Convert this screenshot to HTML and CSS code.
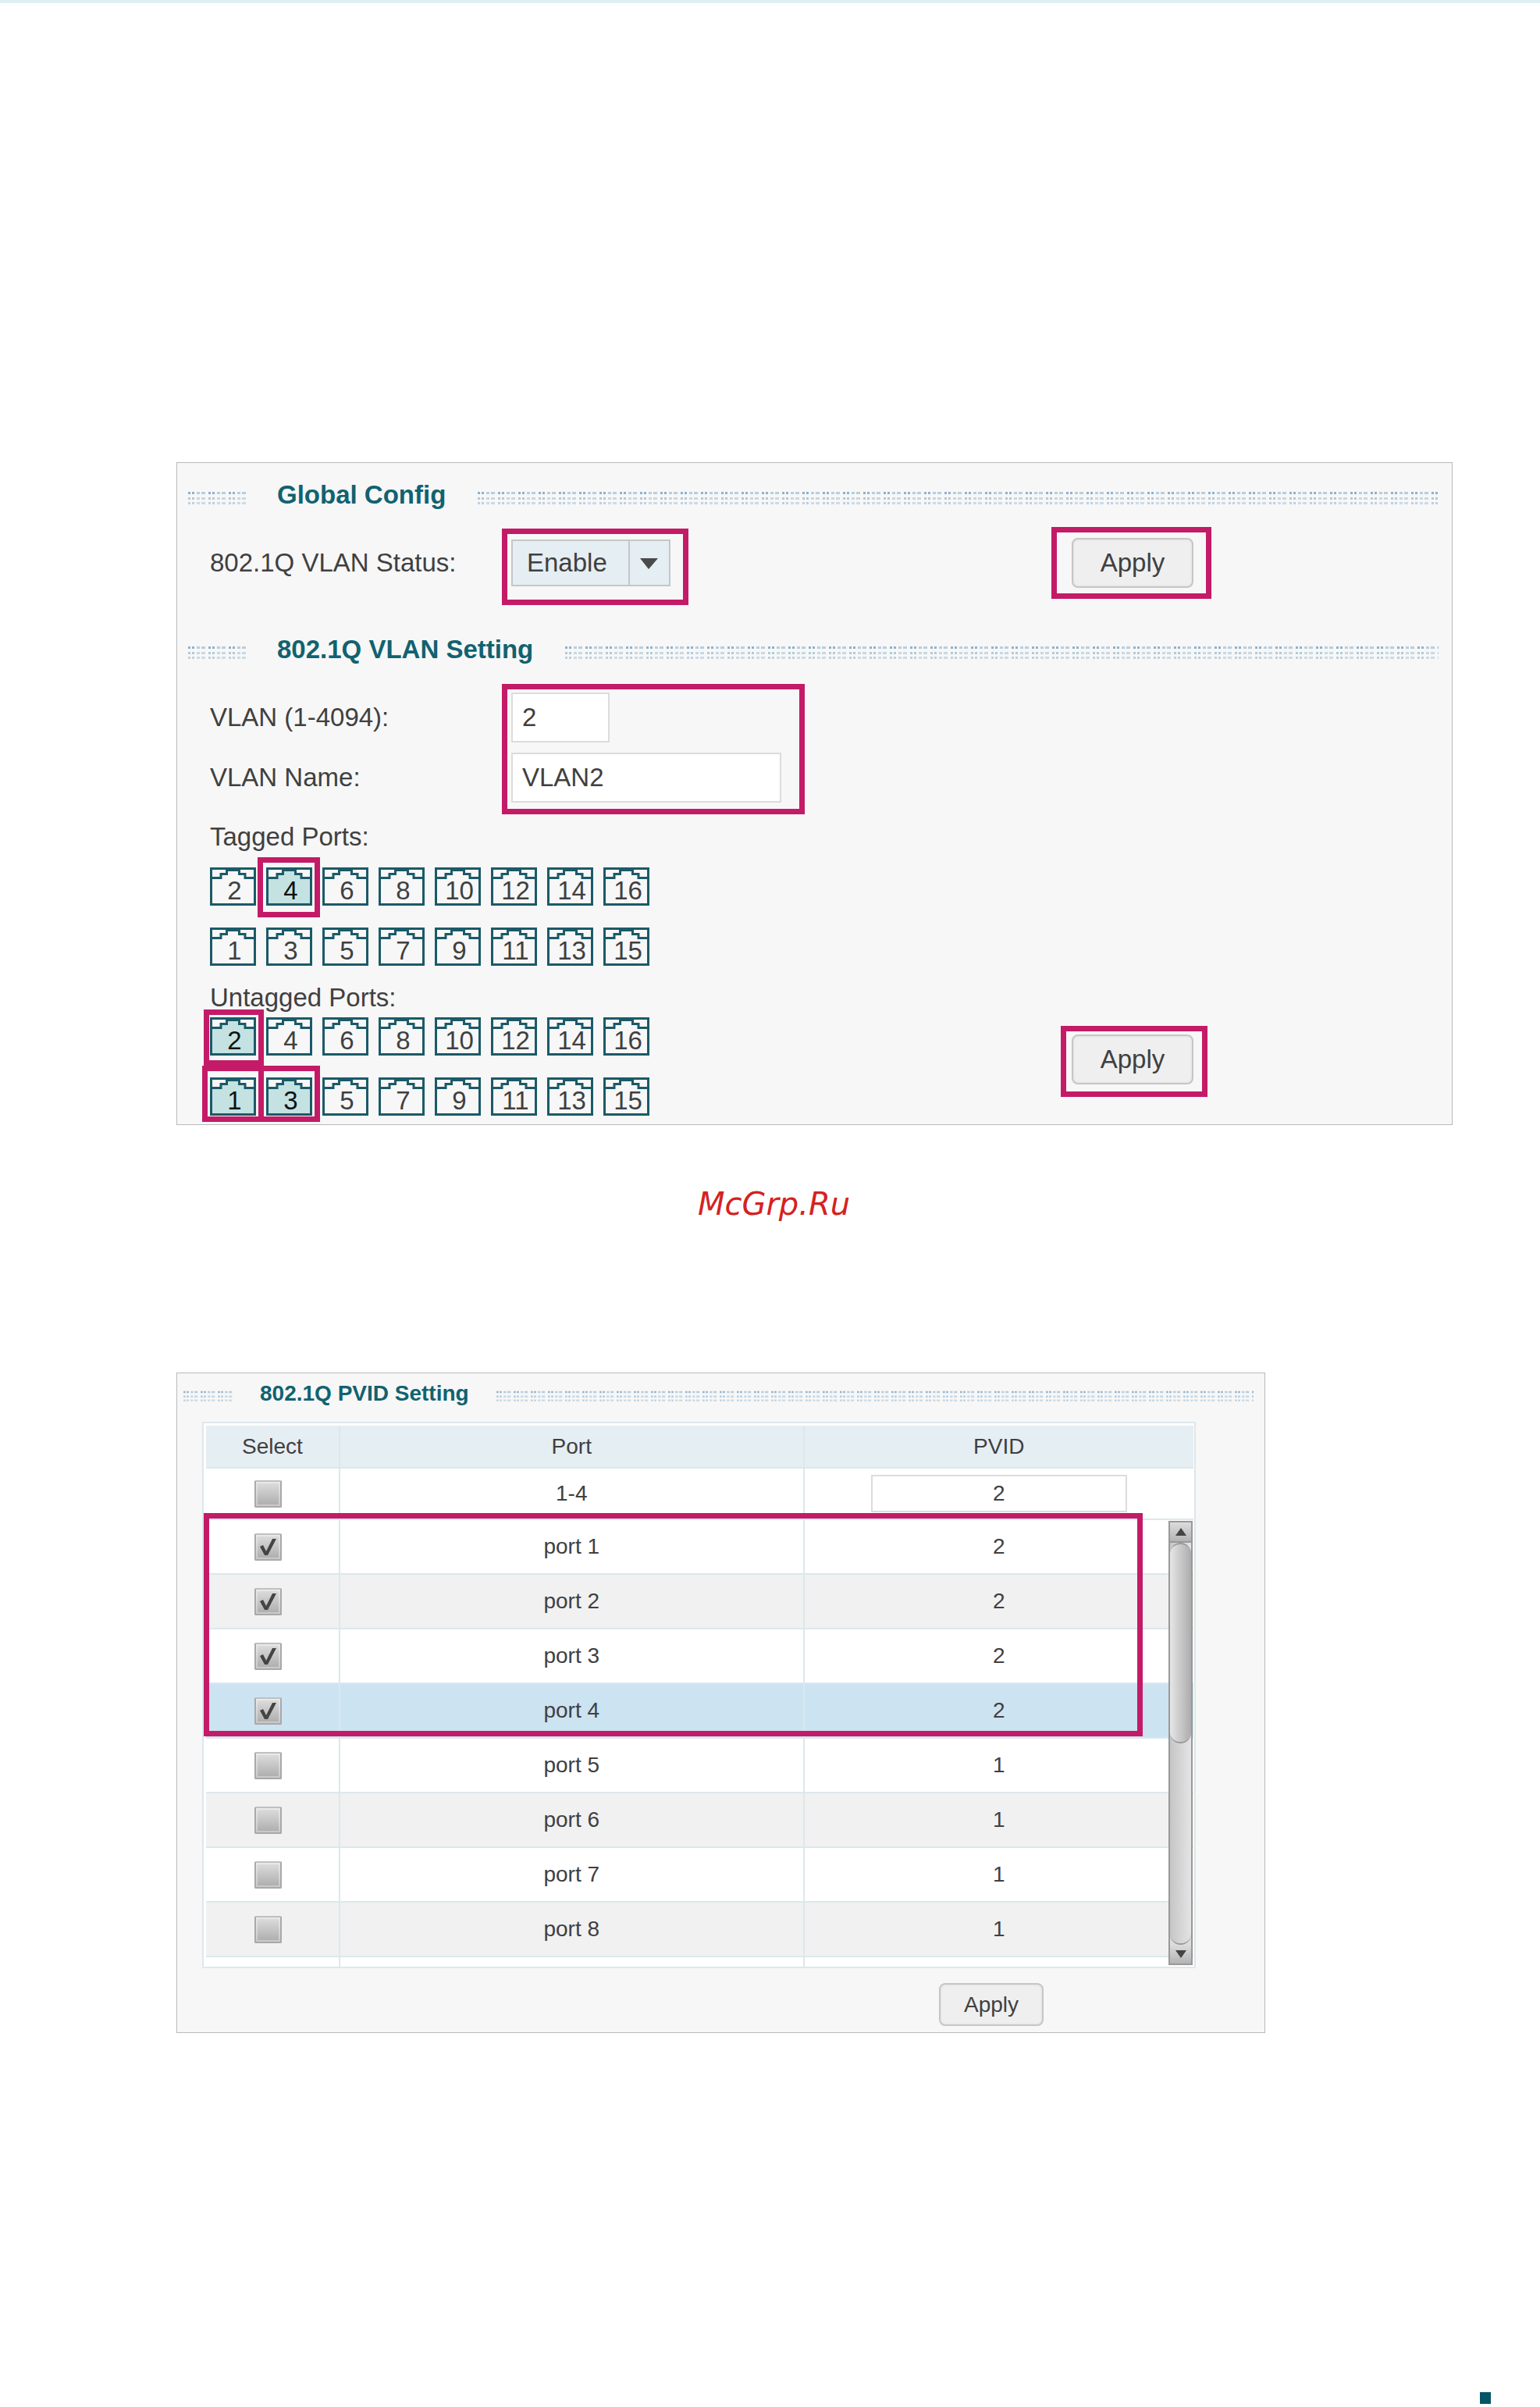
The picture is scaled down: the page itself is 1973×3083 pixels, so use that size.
FILE: index.html
```html
<!DOCTYPE html>
<html lang="en">
<head>
  <meta charset="UTF-8" />
  <meta name="viewport" content="width=device-width, initial-scale=1.0" />
  <title>802.1Q VLAN</title>
  <link rel="stylesheet" href="styles.css">
</head>
<body>
  <main>
    <section class="panel vlan-panel">
      <h2 class="section-title">Global Config</h2>
      <div class="row">
        <label for="status">802.1Q VLAN Status:</label>
        <span class="mark mark-select">
          <select id="status">
            <option>Enable</option>
            <option>Disable</option>
          </select>
        </span>
        <span class="mark mark-apply"><button class="btn">Apply</button></span>
      </div>

      <h2 class="section-title">802.1Q VLAN Setting</h2>
      <div class="fields">
        <div class="field-labels">
          <label for="vlanId">VLAN (1-4094):</label>
          <label for="vlanName">VLAN Name:</label>
        </div>
        <div class="field-inputs mark mark-fields">
          <input class="vlan-id" id="vlanId" type="text" value="2">
          <input class="vlan-name" id="vlanName" type="text" value="VLAN2">
        </div>
      </div>

      <h3 class="ports-title">Tagged Ports:</h3>
      <div class="ports tagged" id="tagged"></div>
      <h3 class="ports-title">Untagged Ports:</h3>
      <div class="ports-row">
        <div class="ports untagged" id="untagged"></div>
        <span class="mark mark-apply-low"><button class="btn">Apply</button></span>
      </div>
    </section>

    <p class="site-name">McGrp.Ru</p>

    <section class="panel pvid-panel">
      <h2 class="section-title">802.1Q PVID Setting</h2>
      <div class="table-wrap">
        <table>
          <thead>
            <tr><th class="col-select">Select</th><th class="col-port">Port</th><th>PVID</th></tr>
            <tr class="edit-row">
              <td><input type="checkbox" aria-label="Select all ports"></td>
              <td>1-4</td>
              <td><input class="pvid" type="text" value="2" aria-label="PVID"></td>
            </tr>
          </thead>
          <tbody id="portRows"></tbody>
        </table>
        <div class="rows-mark"></div>
        <div class="scrollbar">
          <button class="scroll-btn" aria-label="Scroll up"><svg viewBox="0 0 14 10"><path d="M7 0L14 10H0z"/></svg></button>
          <div class="track"><div class="thumb"></div></div>
          <button class="scroll-btn" aria-label="Scroll down"><svg viewBox="0 0 14 10"><path d="M0 0H14L7 10z"/></svg></button>
        </div>
      </div>
      <button class="btn btn-small">Apply</button>
    </section>
  </main>
  <footer><span class="page-tab"></span></footer>
  <script src="script.js"></script>
</body>
</html>
```
FILE: styles.css
```css
* {
  box-sizing: border-box;
}
body {
  margin: 0;
  min-height: 100vh;
  display: flex;
  flex-direction: column;
  border-top: 4px solid #e1eff3;
  background: #fff;
  color: #404040;
  font-family: "Liberation Sans", Arial, sans-serif;
  font-size: 33px;
  line-height: 38px;
}
main {
  padding: 588px 112px 0 226px;
}
button, input, select {
  font: inherit;
  color: inherit;
}

/* panels */
.panel {
  background: #f7f7f7;
  border: 1px solid #b9b9b9;
}
.vlan-panel {
  padding: 22px 0 10px;
}
.section-title {
  display: flex;
  align-items: center;
  gap: 40px;
  margin: 0;
  padding: 0 17px 0 13px;
  font-size: inherit;
  color: #116270;
}
.section-title::before,
.section-title::after {
  content: "";
  height: 17px;
  margin-top: 6px;
  background: url("data:image/svg+xml,%3Csvg xmlns='http://www.w3.org/2000/svg' width='26' height='17' viewBox='0 0 26 17'%3E%3Cg fill='%238fb2cd'%3E%3Cpath d='M1 1h3v3h-3zM6 1h3v3h-3z'/%3E%3Cpath d='M12 1h4v3h-4zM18 1h5v3h-5z' opacity='.6'/%3E%3Cpath d='M1 8h3v3h-3zM6 8h3v3h-3z' opacity='.65'/%3E%3Cpath d='M12 8h4v3h-4zM18 8h5v3h-5z' opacity='.45'/%3E%3Cpath d='M1 14h3v3h-3zM6 14h3v3h-3z' opacity='.55'/%3E%3Cpath d='M12 14h4v3h-4zM18 14h5v3h-5z' opacity='.4'/%3E%3C/g%3E%3C/svg%3E") repeat-x;
}
.section-title::before {
  width: 75px;
}
.section-title::after {
  flex: 1;
}
.row {
  display: grid;
  grid-template-columns: 386px 1fr auto;
  align-items: center;
  justify-items: start;
  height: 64px;
  margin: 36px 331px 60px 42px;
}
.fields {
  display: flex;
  margin: 36px 42px 25px;
}
.field-labels {
  width: 386px;
}
.field-labels,
.field-inputs {
  display: grid;
  grid-auto-rows: 64px;
  row-gap: 13px;
  align-items: center;
}
input[type="text"] {
  height: 64px;
  padding: 0 12px;
  border: 2px solid #dcdcdc;
  background: #fff;
}
.vlan-id {
  width: 126px;
}
.vlan-name {
  width: 346px;
}
select {
  display: block;
  width: 204px;
  height: 60px;
  padding: 0 18px;
  appearance: none;
  border: 2px solid #c4c7c9;
  border-radius: 0;
  background: #e5eef3 url("data:image/svg+xml,%3Csvg xmlns='http://www.w3.org/2000/svg' width='52' height='56'%3E%3Cpath d='M1 0v56' stroke='%23c4c7c9' stroke-width='2'/%3E%3Cpath d='M15 22h23L26 36z' fill='%234a4a4a'/%3E%3C/svg%3E") no-repeat right;
}
.btn {
  display: block;
  width: 156px;
  height: 64px;
  padding: 0;
  border: 2px solid #c6c6c6;
  border-radius: 8px;
  background: #efefef;
  box-shadow: inset 0 0 3px #d8d8d8;
}

/* highlight frames */
.mark {
  position: relative;
}
.mark::after,
.rows-mark {
  content: "";
  position: absolute;
  border: 7px solid #c31b67;
  pointer-events: none;
}
.mark-select::after {
  inset: -14px -23px -24px -12px;
}
.mark-apply::after {
  inset: -14px -23px -14px -26px;
}
.mark-apply-low::after {
  inset: -11px -18px -16px -14px;
}
.mark-fields::after {
  inset: -11px -30px -15px -12px;
}

/* ports */
.ports-title {
  margin: 0 42px;
  font-size: inherit;
  font-weight: normal;
}
.ports {
  display: grid;
  grid-template-columns: repeat(8, 59px);
  gap: 28px 13px;
}
.tagged {
  margin: 20px 42px 22px;
}
.ports-row {
  display: flex;
  justify-content: space-between;
  align-items: flex-start;
  margin: 6px 331px 1px 42px;
}
.mark-apply-low {
  margin-top: 22px;
}
.port {
  display: grid;
  place-items: center;
  width: 59px;
  height: 49px;
  padding: 0;
  border: 0;
  background: none;
}
.port svg,
.port span {
  grid-area: 1 / 1;
}
.port span {
  padding: 11px 0 0 4px;
}
.port path {
  fill: none;
  stroke: #1b5a68;
  stroke-width: 3;
}
.port .jack-fill {
  stroke: none;
}
.port .jack-top {
  fill: #1b5a68;
  stroke: none;
}
.port.on {
  color: #111;
}
.port.on .jack-fill {
  fill: #c4e2e1;
}
.tagged .mark::after {
  inset: -13px -10px -15px -11px;
}
.untagged .mark::after {
  inset: -15px -10px -8px;
}
.untagged .mark.upper::after {
  inset: -10px -10px -13px -8px;
}

.site-name {
  margin: 77px 0 192px;
  padding-right: 104px;
  text-align: center;
  color: #d42222;
  font: italic 40px/48px "DejaVu Sans", sans-serif;
}

/* PVID table */
.pvid-panel {
  margin-right: 240px;
  padding: 10px 0 8px;
  font-size: 28px;
  line-height: 32px;
}
.pvid-panel .section-title {
  gap: 34px;
  padding: 0 14px 0 7px;
}
.pvid-panel .section-title::before,
.pvid-panel .section-title::after {
  height: 14px;
  margin-top: 6px;
  background-size: 22px 14px;
}
.pvid-panel .section-title::before {
  width: 65px;
}
.table-wrap {
  position: relative;
  margin: 20px 88px 19px 32px;
  padding: 3px 1px 0 3px;
  border: 2px solid #dce8ec;
  background: #fff;
}
table {
  width: 100%;
  table-layout: fixed;
  border-collapse: separate;
  border-spacing: 0;
  text-align: center;
}
th, td {
  height: 70px;
  padding: 0;
  border-right: 2px solid #dce8ec;
  border-bottom: 2px solid #dce8ec;
}
th:last-child, td:last-child {
  border-right: 0;
}
th {
  height: 55px;
  background: #e5eef3;
  font-weight: normal;
}
.col-select {
  width: 172px;
}
.col-port {
  width: 47%;
}
td:first-child {
  padding-right: 12px;
}
.edit-row td {
  height: 66px;
}
tbody tr:nth-child(even) td {
  background: #f1f1f1;
}
tbody tr.current td {
  background: #cce3f2;
}
tbody tr.cut td {
  height: 12px;
  padding: 0;
  border-bottom: 0;
}
input[type="checkbox"] {
  display: block;
  width: 35px;
  height: 35px;
  margin: 0 auto;
  appearance: none;
  border: 2px solid #a9a9a9;
  border-top-color: #c0c0c0;
  border-radius: 2px;
  background: linear-gradient(#dedede, #acacac);
  box-shadow: inset 0 0 0 2px rgba(255, 255, 255, 0.35);
}
input[type="checkbox"]:checked {
  background: url("data:image/svg+xml,%3Csvg xmlns='http://www.w3.org/2000/svg' width='31' height='31'%3E%3Cpath d='M5 15l4-2 4 8 8-16h5L15 26h-4z' fill='%23444'/%3E%3C/svg%3E"), linear-gradient(#dedede, #acacac);
}
input.pvid {
  display: block;
  width: 328px;
  height: 48px;
  margin: 0 auto;
  text-align: center;
}
.rows-mark {
  inset: 115px 66px auto 0;
  height: 286px;
}
.scrollbar {
  position: absolute;
  top: 125px;
  right: 2px;
  bottom: 2px;
  width: 31px;
  display: flex;
  flex-direction: column;
  border: 2px solid #999;
  background: #ddd;
}
.scroll-btn {
  display: grid;
  place-items: center;
  height: 24px;
  padding: 0;
  border: 0;
  background: linear-gradient(#dcdcdc, #b4b4b4);
}
.scroll-btn svg {
  width: 14px;
  height: 10px;
  fill: #444;
}
.track {
  flex: 1;
  border: solid #999;
  border-width: 2px 0;
  border-radius: 0 0 14px 14px;
  background: linear-gradient(90deg, #c6c6c6, #e4e4e4);
}
.thumb {
  height: 50%;
  border: 2px solid #999;
  border-width: 2px 0;
  border-radius: 14px;
  background: linear-gradient(90deg, #e6e6e6, #acacac);
}
.btn-small {
  width: 134px;
  height: 55px;
  margin: 0 283px 0 auto;
}

footer {
  display: flex;
  justify-content: flex-end;
  margin-top: auto;
  padding: 0 63px 4px;
}
.page-tab {
  width: 14px;
  height: 15px;
  background: #005566;
}
```
FILE: script.js
```js
// Port pickers: even ports on the upper row, odd ports below
const portOrder = [2, 4, 6, 8, 10, 12, 14, 16, 1, 3, 5, 7, 9, 11, 13, 15];

function drawPorts(id, selected) {
  const box = document.getElementById(id);
  portOrder.forEach(n => {
    const on = selected.includes(n);
    const btn = document.createElement("button");
    btn.className = "port" + (on ? " on mark" : "") + (on && n % 2 === 0 ? " upper" : "");
    btn.setAttribute("aria-pressed", on);
    btn.innerHTML = `<svg width="59" height="49" viewBox="0 0 59 49">
      <path class="jack-fill" d="M2 14H14V9H22V4H37V9H45V14H57V47H2z"/>
      <path class="jack-top" d="M20 1H39V5H20z"/>
      <path d="M1.5 1.5H57.5V47.5H1.5z"/>
      <path d="M1.5 13.5H14V8.5H21.5V3.5H37.5V8.5H45V13.5H57.5"/>
    </svg><span>${n}</span>`;
    box.appendChild(btn);
  });
}

drawPorts("tagged", [4]);
drawPorts("untagged", [2, 1, 3]);

// PVID rows
const rows = document.getElementById("portRows");
for (let n = 1; n <= 8; n++) {
  const tr = document.createElement("tr");
  if (n === 4) tr.className = "current";
  tr.innerHTML = `<td><input type="checkbox" aria-label="Select port ${n}"${n <= 4 ? " checked" : ""}></td>
    <td>port ${n}</td><td>${n <= 4 ? 2 : 1}</td>`;
  rows.appendChild(tr);
}
// the next row is cut off by the bottom of the list
const cut = document.createElement("tr");
cut.className = "cut";
cut.innerHTML = "<td></td><td></td><td></td>";
rows.appendChild(cut);
```
